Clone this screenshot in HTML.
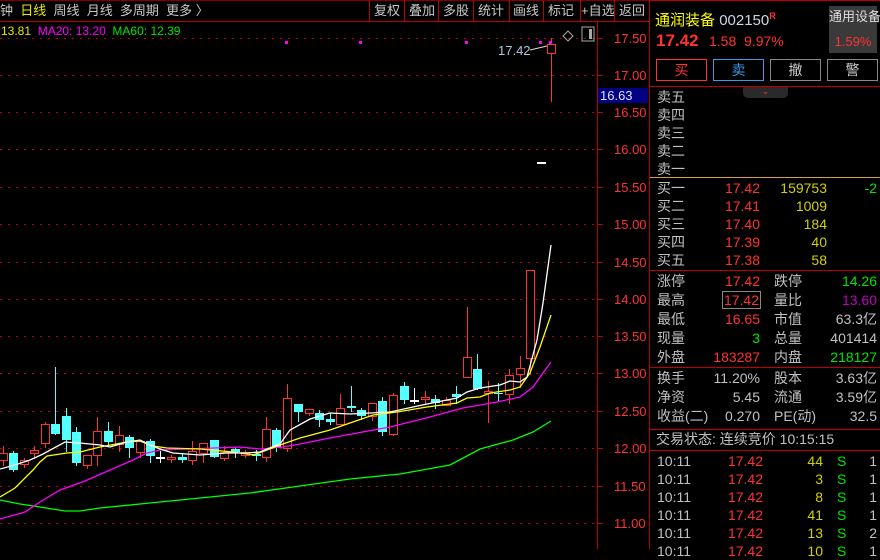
<!DOCTYPE html>
<html><head><meta charset="utf-8"><style>
body{margin:0;width:880px;height:549px;background:#000;overflow:hidden;font-family:"Liberation Sans","Noto Sans CJK SC",sans-serif;font-size:13px;color:#c0c0c0;position:relative}
.a{position:absolute;white-space:nowrap;line-height:16px}
.p{font-size:14px}
.r{text-align:right}
.red{color:#ff3232}.yel{color:#e8e800}.grn{color:#00e600}.lb{color:#c0c0c0}
.btn{position:absolute;top:59px;width:49px;height:20px;border:1px solid #888;text-align:center;line-height:20px;font-size:14px}
.hl{position:absolute;left:650px;width:230px;height:1px;background:#c00000}
</style></head><body>
<div class="a" style="left:0;top:3px;color:#c8c8c8">钟&nbsp;&nbsp;<span class="yel">日线</span>&nbsp;&nbsp;周线&nbsp;&nbsp;月线&nbsp;&nbsp;多周期&nbsp;&nbsp;更多 〉</div>
<div style="position:absolute;left:0;top:21px;width:650px;height:1px;background:#c00000"></div>
<div style="position:absolute;left:0;top:0;width:650px;height:1px;background:#800000"></div>
<div class="a" style="left:369px;top:3px;width:280px;color:#c8c8c8">
<span style="position:absolute;left:0;top:-3px;width:1px;height:21px;background:#c00000"></span>
<span style="position:absolute;left:5px">复权</span>
<span style="position:absolute;left:35px;top:-3px;width:1px;height:21px;background:#c00000"></span>
<span style="position:absolute;left:40px">叠加</span>
<span style="position:absolute;left:69px;top:-3px;width:1px;height:21px;background:#c00000"></span>
<span style="position:absolute;left:74px">多股</span>
<span style="position:absolute;left:104px;top:-3px;width:1px;height:21px;background:#c00000"></span>
<span style="position:absolute;left:109px">统计</span>
<span style="position:absolute;left:140px;top:-3px;width:1px;height:21px;background:#c00000"></span>
<span style="position:absolute;left:144px">画线</span>
<span style="position:absolute;left:174px;top:-3px;width:1px;height:21px;background:#c00000"></span>
<span style="position:absolute;left:179px">标记</span>
<span style="position:absolute;left:211px;top:-3px;width:1px;height:21px;background:#c00000"></span>
<span style="position:absolute;left:212px">+自选</span>
<span style="position:absolute;left:245px;top:-3px;width:1px;height:21px;background:#c00000"></span>
<span style="position:absolute;left:250px">返回</span>
</div>
<div class="a" style="left:1px;top:23px;font-size:12px"><span class="yel">13.81</span>&nbsp; <span style="color:#ff00ff">MA20: 13.20</span>&nbsp; <span class="grn">MA60: 12.39</span></div>

<svg style="position:absolute;left:0;top:0" width="650" height="549">
<g stroke="#c00000" stroke-dasharray="2,6" stroke-width="1">
<line x1="0" x2="597" y1="38.5" y2="38.5"/><line x1="0" x2="597" y1="75.5" y2="75.5"/><line x1="0" x2="597" y1="112.5" y2="112.5"/><line x1="0" x2="597" y1="149.5" y2="149.5"/><line x1="0" x2="597" y1="187.5" y2="187.5"/><line x1="0" x2="597" y1="224.5" y2="224.5"/><line x1="0" x2="597" y1="262.5" y2="262.5"/><line x1="0" x2="597" y1="299.5" y2="299.5"/><line x1="0" x2="597" y1="336.5" y2="336.5"/><line x1="0" x2="597" y1="373.5" y2="373.5"/><line x1="0" x2="597" y1="411.5" y2="411.5"/><line x1="0" x2="597" y1="448.5" y2="448.5"/><line x1="0" x2="597" y1="486.5" y2="486.5"/><line x1="0" x2="597" y1="523.5" y2="523.5"/>
</g>
<line x1="597.5" x2="597.5" y1="22" y2="549" stroke="#c00000"/>
<g stroke="#c00000"><line x1="598" x2="603" y1="38.5" y2="38.5"/><line x1="598" x2="603" y1="75.5" y2="75.5"/><line x1="598" x2="603" y1="112.5" y2="112.5"/><line x1="598" x2="603" y1="149.5" y2="149.5"/><line x1="598" x2="603" y1="187.5" y2="187.5"/><line x1="598" x2="603" y1="224.5" y2="224.5"/><line x1="598" x2="603" y1="262.5" y2="262.5"/><line x1="598" x2="603" y1="299.5" y2="299.5"/><line x1="598" x2="603" y1="336.5" y2="336.5"/><line x1="598" x2="603" y1="373.5" y2="373.5"/><line x1="598" x2="603" y1="411.5" y2="411.5"/><line x1="598" x2="603" y1="448.5" y2="448.5"/><line x1="598" x2="603" y1="486.5" y2="486.5"/><line x1="598" x2="603" y1="523.5" y2="523.5"/></g>
<g fill="#ff3232" font-size="13" font-family="Liberation Sans">
<text x="614" y="43">17.50</text><text x="614" y="80">17.00</text><text x="614" y="117">16.50</text><text x="614" y="154">16.00</text><text x="614" y="192">15.50</text><text x="614" y="229">15.00</text><text x="614" y="267">14.50</text><text x="614" y="304">14.00</text><text x="614" y="341">13.50</text><text x="614" y="378">13.00</text><text x="614" y="416">12.50</text><text x="614" y="453">12.00</text><text x="614" y="491">11.50</text><text x="614" y="528">11.00</text>
</g>
<rect x="598" y="88" width="50" height="15" fill="#000080"/>
<text x="600" y="100" fill="#e0e0ff" font-size="13" font-family="Liberation Sans">16.63</text>
<path d="M568 31 L573 36 L568 41 L563 36 Z" fill="none" stroke="#aaa"/>
<rect x="582" y="27" width="12" height="14" fill="none" stroke="#aaa"/><rect x="589" y="29" width="3" height="10" fill="#aaa"/>
<g id="c" shape-rendering="crispEdges"></g>
<g fill="none" stroke-width="1.3">
<polyline stroke="#00ff00" points="0,500 20,504 40,507 65,511 80,511 100,508 150,503 200,498 250,493 300,486 350,479 400,474 450,465 480,449 513,440 533,432 551,421"/>
<polyline stroke="#ff00ff" points="0,519 25,512 40,502 60,490 85,481 110,470 133,460 147,453 160,450 187,449 240,447 260,449 283,447 300,444 330,438 390,427 430,417 463,408 497,402 520,397 533,387 543,373 551,362"/>
<polyline stroke="#ffff00" points="0,497 15,488 33,470 40,462 47,456 67,453 80,452 100,447 127,442 140,441 153,446 167,448 200,449 233,452 253,455 267,450 280,445 300,438 330,430 350,423 373,415 397,412 427,407 457,403 467,398 480,397 490,393 510,390 520,387 530,373 540,347 551,315"/>
<polyline stroke="#ffffff" points="0,469 15,465 30,460 43,454 65,442 80,443 100,445 110,447 127,442 140,440 150,445 160,449 173,453 200,455 227,453 247,453 260,452 267,449 280,444 290,430 310,419 330,413 350,414 370,413 390,412 413,407 427,404 447,400 457,398 467,392 480,388 500,385 510,381 520,382 527,377 537,340 543,303 551,245"/>
</g>
<g fill="#ff00ff"><rect x="285" y="41" width="3" height="3"/><rect x="359" y="41" width="3" height="3"/><rect x="465" y="41" width="3" height="3"/><rect x="539" y="41" width="3" height="3"/><rect x="549" y="41" width="3" height="3"/></g>
<text x="498" y="55" fill="#b0c4de" font-size="13" font-family="Liberation Sans">17.42</text>
<polyline points="530,50 547,46" stroke="#ddd" fill="none"/>
</svg>

<div style="position:absolute;left:649px;top:0;width:1px;height:549px;background:#c00000"></div>
<div class="hl" style="top:0"></div>
<div class="a" style="left:655px;top:7px;font-size:15px;line-height:18px"><span style="color:#ffff00">通润装备</span> <span style="color:#c8d8e8">002150</span><sup style="color:#ff3232;font-size:9px;font-weight:bold">R</sup></div>
<div style="position:absolute;left:829px;top:6px;width:48px;height:47px;background:#3a3a3a"></div>
<div class="a" style="left:829px;top:9px;width:48px;text-align:center;color:#ddd">通用设备</div>
<div class="a" style="left:829px;top:34px;width:48px;text-align:center;color:#ff3232">1.59%</div>
<div class="a red" style="left:656px;top:31px;font-size:17px;font-weight:bold;line-height:20px">17.42</div>
<div class="a red" style="left:709px;top:33px;font-size:14px">1.58&nbsp;&nbsp;9.97%</div>
<div class="btn" style="left:656px;border-color:#ff3232;color:#ff3232">买</div>
<div class="btn" style="left:713px;border-color:#3c9ae6;color:#3c9ae6">卖</div>
<div class="btn" style="left:770px;color:#ccc">撤</div>
<div class="btn" style="left:827px;color:#ccc">警</div>
<div class="hl" style="top:86px"></div>
<div style="position:absolute;left:743px;top:87px;width:45px;height:11px;background:#2a2a2a;border-radius:0 0 5px 5px;color:#ff3232;font-size:9px;text-align:center;line-height:9px">⌄</div>
<div class="a p" style="left:657px;top:88px;line-height:18px">卖五<br>卖四<br>卖三<br>卖二<br>卖一</div>
<div style="position:absolute;left:650px;top:177px;width:230px;height:1px;background:#d4a040"></div>
<div class="a p" style="left:657px;top:179px;line-height:18px">买一<br>买二<br>买三<br>买四<br>买五</div>
<div class="a p r red" style="left:700px;top:179px;width:60px;line-height:18px">17.42<br>17.41<br>17.40<br>17.39<br>17.38</div>
<div class="a p r" style="left:760px;top:179px;width:67px;line-height:18px;color:#d0d000">159753<br>1009<br>184<br>40<br>58</div>
<div class="a p r grn" style="left:840px;top:179px;width:37px;line-height:18px">-2</div>
<div class="hl" style="top:270px"></div>
<div class="a p" style="left:657px;top:272px;line-height:19px">涨停<br>最高<br>最低<br>现量<br>外盘</div>
<div class="a p r" style="left:700px;top:272px;width:60px;line-height:19px"><span class="red">17.42</span><br><span class="red" style="outline:1px solid #888;padding:0 1px">17.42</span><br><span class="red">16.65</span><br><span class="grn">3</span><br><span class="red">183287</span></div>
<div class="a p" style="left:774px;top:272px;line-height:19px">跌停<br>量比<br>市值<br>总量<br>内盘</div>
<div class="a p r" style="left:800px;top:272px;width:77px;line-height:19px"><span class="grn">14.26</span><br><span style="color:#c000c0">13.60</span><br>63.3亿<br>401414<br><span class="grn">218127</span></div>
<div class="hl" style="top:367px"></div>
<div class="a p" style="left:657px;top:369px;line-height:19px">换手<br>净资<br>收益(二)</div>
<div class="a p r" style="left:700px;top:369px;width:60px;line-height:19px">11.20%<br>5.45<br>0.270</div>
<div class="a p" style="left:774px;top:369px;line-height:19px">股本<br>流通<br>PE(动)</div>
<div class="a p r" style="left:800px;top:369px;width:77px;line-height:19px">3.63亿<br>3.59亿<br>32.5</div>
<div class="hl" style="top:429px"></div>
<div class="a p" style="left:656px;top:431px">交易状态: 连续竞价 10:15:15</div>
<div class="hl" style="top:450px"></div>
<div class="a p" style="left:657px;top:452px;line-height:18px">10:11<br>10:11<br>10:11<br>10:11<br>10:11<br>10:11</div>
<div class="a p r red" style="left:700px;top:452px;width:63px;line-height:18px">17.42<br>17.42<br>17.42<br>17.42<br>17.42<br>17.42</div>
<div class="a p r" style="left:790px;top:452px;width:33px;line-height:18px;color:#d0d000">44<br>3<br>8<br>41<br>13<br>10</div>
<div class="a p grn" style="left:837px;top:452px;line-height:18px">S<br>S<br>S<br>S<br>S<br>S</div>
<div class="a p r" style="left:860px;top:452px;width:17px;line-height:18px">1<br>1<br>1<br>1<br>2<br>1</div>

<script>
var d=[[3,'r',453,460,446,466],[13,'c',453,470,451,472],[24,'r',460,464,458,468],[34,'r',450,453,446,459],[45,'r',424,443,422,448],[55,'c',424,434,367,435],[66,'c',416,440,408,452],[76,'c',432,463,427,466],[87,'r',455,465,455,469],[97,'r',431,455,417,466],[108,'c',431,442,422,446],[119,'r',435,444,426,452],[129,'c',437,448,435,458],[140,'r',441,452,440,458],[150,'c',441,456,439,463],[160,'w',457,457,451,463],[171,'r',457,459,455,463],[182,'c',457,460,453,463],[192,'r',451,460,441,465],[203,'r',443,453,443,463],[214,'c',440,457,440,458],[224,'r',452,458,446,461],[235,'c',449,452,447,458],[245,'r',452,455,450,458],[256,'c',454,456,450,461],[266,'r',429,457,417,462],[276,'c',430,448,428,452],[287,'r',398,448,384,452],[298,'c',404,412,404,422],[309,'r',409,413,409,416],[319,'c',413,420,410,427],[330,'c',419,422,413,425],[340,'r',408,424,394,425],[351,'c',406,408,386,412],[361,'c',410,416,408,420],[372,'r',403,416,403,421],[382,'c',401,432,397,436],[393,'r',395,434,393,436],[404,'c',386,400,382,404],[414,'w',400,400,388,404],[425,'r',397,399,391,405],[435,'c',399,403,395,409],[446,'r',400,405,397,406],[456,'c',394,397,386,404],[467,'r',357,377,307,378],[477,'c',369,389,354,390],[488,'r',391,393,381,423],[498,'c',393,394,383,402],[509,'r',375,394,369,404],[520,'r',368,374,356,388],[530,'r',270,358,270,375],[541,'w',162,162,162,162],[551,'r',44,53,38,102]];
var s='';d.forEach(function(k){var x=k[0],t=k[1],o=k[2],c=k[3],h=k[4],l=k[5];
var col=t=='r'?'#ff3232':t=='c'?'#54ffff':'#ffffff';
s+='<rect x="'+x+'" y="'+h+'" width="1" height="'+Math.max(l-h,1)+'" fill="'+col+'"/>';
var hgt=Math.max(c-o,1);
if(t=='r'){s+='<rect x="'+(x-4)+'" y="'+o+'" width="9" height="'+(hgt+1)+'" fill="'+col+'"/>';if(hgt>1)s+='<rect x="'+(x-3)+'" y="'+(o+1)+'" width="7" height="'+(hgt-1)+'" fill="#000"/>';}
else if(t=='c')s+='<rect x="'+(x-4)+'" y="'+o+'" width="9" height="'+hgt+'" fill="'+col+'"/>';
else s+='<rect x="'+(x-4)+'" y="'+o+'" width="9" height="2" fill="'+col+'"/>';});
document.getElementById('c').innerHTML=s;
</script>
</body></html>
